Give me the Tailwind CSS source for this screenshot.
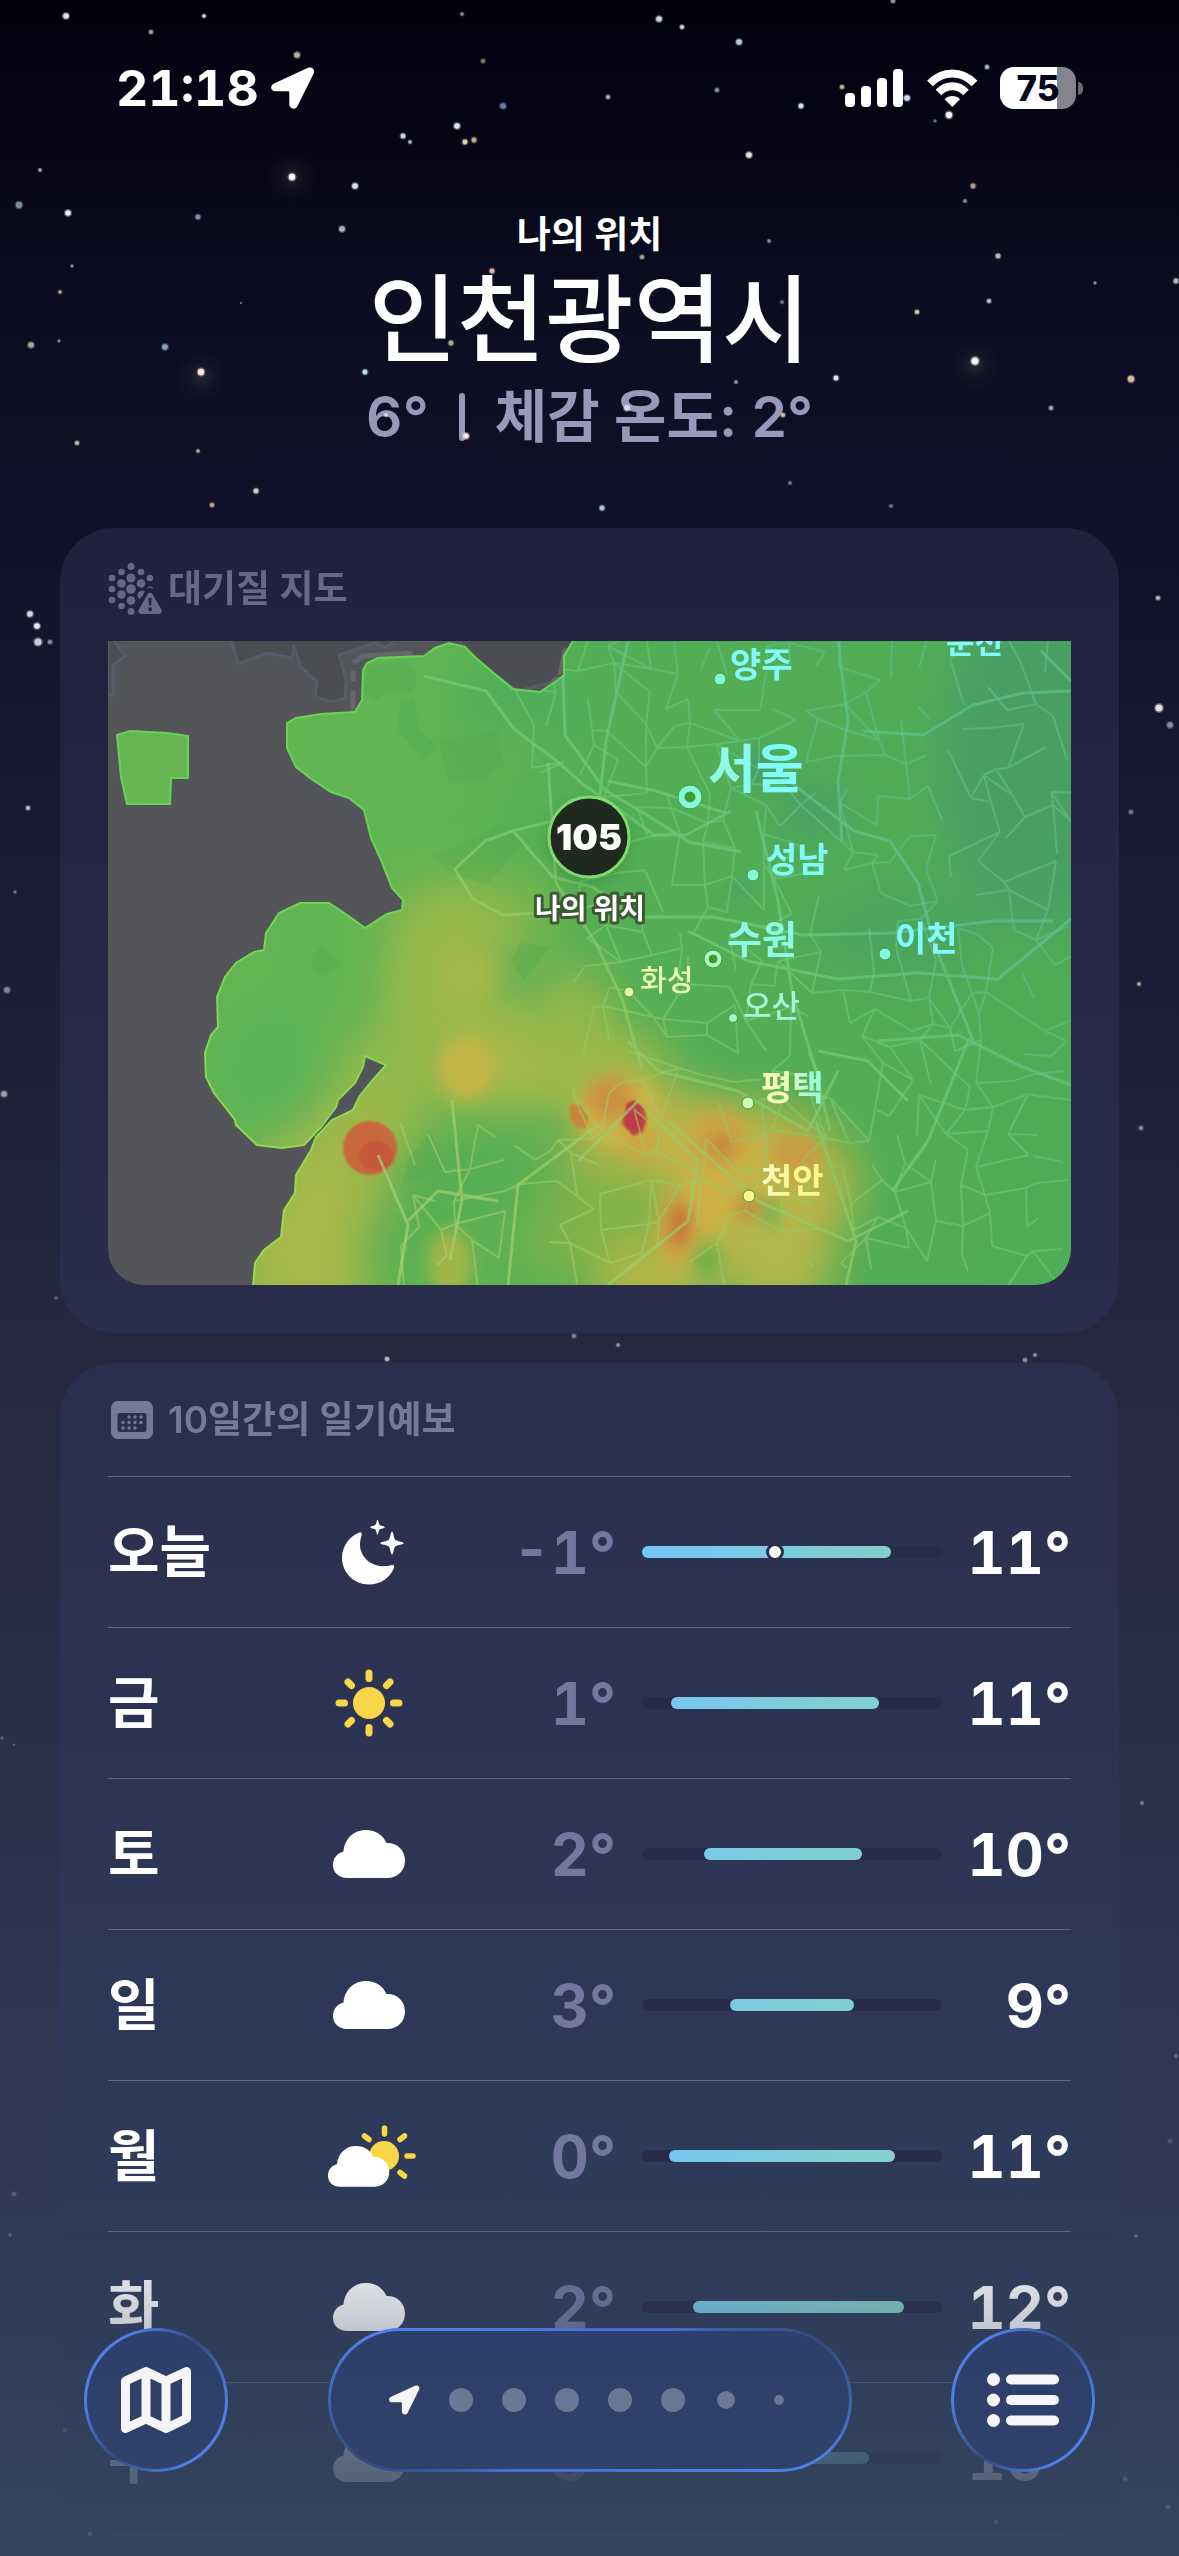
<!DOCTYPE html>
<html lang="ko">
<head>
  <meta charset="UTF-8">
  <meta name="viewport" content="width=device-width, initial-scale=1">
  <title>날씨 - 인천광역시</title>
  <script src="https://cdn.jsdelivr.net/npm/@tailwindcss/browser@4"></script>
  <style>
    body { font-family: Inter, 'Noto Sans CJK KR', sans-serif; }
  </style>
</head>
<body class="bg-[#02000f] text-white">

  <!-- Shared icons -->
  <svg class="hidden">
    <symbol id="i-arrow" viewBox="0 0 44 42">
      <path fill="currentColor" d="M37 .8 3 16.500c-4.500 2.200-3.500 7.700 1.500 7.700h12.300c1 0 1.500.5 1.500 1.500V37c0 5 6 6.500 8.200 2L42.700 6.500C44.500 2.500 41-.8 37 .8Z"/>
    </symbol>
    <symbol id="i-moon" viewBox="-8 0 70 65">
      <g fill="#fff">
        <path d="M17.500 12.500C7 16.500 0 26.500 0 38c0 14.500 12 26.500 27 26.500 11.500 0 21-6.500 25-16.500.8-2-.6-3.400-2.600-2.700C32 50 18 38 18 24.500c0-3.500.6-6 1.600-9 .8-2-.4-3.600-2.100-3Z"/>
        <path d="M35.500-.5c.8 0 1 4 2 5.200s5.300 1.500 5.300 2.500-4.200 1.300-5.300 2.500-1.200 5.100-2 5.100-1-4-2-5.100-5.300-1.500-5.300-2.500 4.200-1.300 5.300-2.500 1.200-5.200 2-5.200Z"/>
        <path d="M50 11.500c1.300 0 1.600 6.500 3.200 8.200s8.500 2 8.500 3.500-6.900 1.700-8.500 3.400-1.900 8.100-3.200 8.100-1.600-6.400-3.200-8.100-8.500-1.900-8.500-3.400 6.900-1.800 8.500-3.500 1.900-8.200 3.200-8.200Z"/>
      </g>
    </symbol>
    <symbol id="i-sun" viewBox="0 0 68 68">
      <circle cx="34" cy="34" r="16" fill="#f8d648"/>
      <path stroke="#f8d648" stroke-width="7" stroke-linecap="round" d="M34 4v5.500M34 58.500V64M4 34h5.500M58.500 34H64M13 13l3.500 3.500M51.500 51.500 55 55M13 55l3.500-3.500M51.500 16.500 55 13"/>
    </symbol>
    <symbol id="i-cloud" viewBox="0 0 72 48">
      <path fill="#fff" d="M14 48C6 48 0 42.500 0 35c0-7 4.500-12 10.500-13.500C11.500 9 20.500 0 33 0c9.500 0 17 5 20.500 13C64 12.500 72 20 72 30.500S64 48 54 48Z"/>
    </symbol>
    <symbol id="i-partly" viewBox="-6 0 94 62">
      <mask id="sun-cut">
        <rect width="88" height="62" fill="#fff"/>
        <path transform="translate(0 21) scale(.85)" stroke="#000" stroke-width="10" d="M14 48C6 48 0 42.500 0 35c0-7 4.500-12 10.500-13.500C11.500 9 20.500 0 33 0c9.500 0 17 5 20.500 13C64 12.500 72 20 72 30.500S64 48 54 48Z"/>
      </mask>
      <circle cx="56" cy="31" r="15" fill="#f8d648" mask="url(#sun-cut)"/>
      <path stroke="#f8d648" stroke-width="5.500" stroke-linecap="round" d="M56.500 3v6M79 31h6M72 14.500l4.500-3.500M72 47.500l4.500 3.500M36.500 11l4.500 3.500"/>
      <path fill="#fff" transform="translate(0 21) scale(.85)" d="M14 48C6 48 0 42.500 0 35c0-7 4.500-12 10.500-13.500C11.500 9 20.500 0 33 0c9.500 0 17 5 20.500 13C64 12.500 72 20 72 30.500S64 48 54 48Z"/>
    </symbol>
  </svg>

  <div class="relative h-screen overflow-hidden bg-[linear-gradient(#02000f_0%,#0a0b1e_10%,#11122a_21%,#1c1e37_38%,#26283f_53%,#2b2f48_68%,#2f3751_80%,#313d57_90%,#35455f_100%)]">

    <!-- Status bar -->
    <div class="flex h-[176px] items-center justify-between pl-[116px] pr-[96px]">
      <div class="flex items-center gap-3">
        <span class="text-[50px] font-bold leading-none tabular-nums">21:18</span>
        <svg class="h-[42px] w-[44px]"><use href="#i-arrow"/></svg>
      </div>
      <div class="flex items-center gap-[22px]">
        <svg class="h-[38px] w-[60px]" viewBox="0 0 60 38" fill="#fff">
          <rect x="0" y="24" width="10" height="14" rx="4"/>
          <rect x="16" y="17" width="10" height="21" rx="4"/>
          <rect x="32" y="9" width="10" height="29" rx="4"/>
          <rect x="48" y="0" width="10" height="38" rx="4"/>
        </svg>
        <svg class="h-[38px] w-[51px]" viewBox="0 0 51 38" fill="none" stroke="#fff">
          <path stroke-width="8" d="M3 14.500c12.500-13.300 32-13.300 44.500 0"/>
          <path stroke-width="8" d="M11.500 23.500c8-8.300 19.500-8.300 27.500 0"/>
          <path fill="#fff" stroke="none" d="m25.300 38-7.700-7.800c4.300-4.200 11.100-4.200 15.400 0Z"/>
        </svg>
        <div class="flex items-center gap-[2px]">
          <span class="flex h-[42px] w-[76px] items-center justify-center rounded-[14px] bg-[linear-gradient(90deg,#fff_75%,#85848e_75%)] text-[35px] font-extrabold leading-none text-[#05041a]">75</span>
          <span class="h-[13px] w-[5px] rounded-r-full bg-[#6a6974]"></span>
        </div>
      </div>
    </div>

    <!-- Location -->
    <header class="flex h-[352px] flex-col items-center pt-[35px]">
      <p class="text-[37px] font-semibold leading-[48px]">나의 위치</p>
      <h1 class="text-[96px] font-medium leading-[120px]">인천광역시</h1>
      <p class="flex items-center gap-[30px] text-[57px] font-semibold leading-[76px] text-[#9a98b8]">
        <span class="tabular-nums">6°</span>
        <span class="h-12 w-[6px] rounded-full bg-current"></span>
        <span>체감 온도: 2°</span>
      </p>
    </header>

    <svg id="stars" class="absolute inset-0 h-full w-full" viewBox="0 0 1179 2556" preserveAspectRatio="xMidYMin slice"></svg>

    <main class="relative -mt-[528px] h-screen px-[60px] pt-[528px] [mask-image:linear-gradient(#000_87%,rgb(0_0_0/.72)_91%,rgb(0_0_0/.22)_96%,rgb(0_0_0/.03)_100%)]">
      <div class="space-y-[30px]">

      <!-- Air quality map -->
      <section class="rounded-[54px] bg-linear-to-b from-[#20213c] to-[#2a2d4b] px-12 pb-12">
        <h2 class="flex h-[113px] items-center gap-[6px] pt-2 text-[37px] font-semibold text-[#68678a]">
          <svg class="h-[52px] w-[54px]" viewBox="0 0 54 52" fill="currentColor">
            <circle cx="23" cy="3.500" r="3.500"/><circle cx="13.500" cy="9" r="3.300"/><circle cx="33" cy="9" r="3.300"/>
            <circle cx="4" cy="15" r="3.300"/><circle cx="23" cy="15" r="4.500"/><circle cx="42" cy="15" r="3.300"/>
            <circle cx="13.500" cy="20.500" r="4.300"/><circle cx="33" cy="20.500" r="4.300"/>
            <circle cx="4" cy="26" r="3.300"/><circle cx="23" cy="26" r="4.800"/><path d="M39 25.500a3.500 3.500 0 0 1 6.500 0c-2-1-4.500-1-6.500 0Z"/>
            <circle cx="13.500" cy="31.500" r="4.300"/><path d="M37 28.500c-2 3-3 6-5.500 7.500a4.300 4.300 0 1 1 5.500-7.500Z"/>
            <circle cx="4" cy="37" r="3.300"/><circle cx="23" cy="37.500" r="4.300"/>
            <circle cx="13.500" cy="43" r="3.300"/><circle cx="23" cy="48.500" r="3.500"/>
            <path fill-rule="evenodd" d="M39.500 31.500c1.200-2.200 4-2.200 5.200 0l8.700 15c1.200 2.300-.2 4.500-2.700 4.500H33.500c-2.500 0-3.900-2.200-2.700-4.500ZM40.500 35l.6 7.500h2l.6-7.500ZM42.100 44.200a2 2 0 1 0 .1 0Z"/>
          </svg>
          대기질 지도
        </h2>
        <svg class="block w-full rounded-b-[36px]" viewBox="0 0 963 644">
          <defs>
            <path id="land" d="M465 0 456 15V34L450 39 432 51 405 48 388 34 368 17 357 6 341 2 327 7 316 15 270 17 259 22 255 29 254 59 247 71 213 73 188 77 179 82V107L188 126 202 137 223 151 241 157 256 169 263 197 273 219 284 247 295 259 294 269 279 273 257 287 242 276 221 262 192 262 171 272 158 292 156 309 146 311 128 322 117 336 109 356 110 386 103 394 97 412 98 436 106 452 117 466 127 479 128 484 149 504 174 507 196 504 213 486 228 466 230 459 247 442 255 426 257 415 278 424 263 441 251 456 245 469 224 479 208 496 203 509 188 534 187 552 176 569 173 596 156 609 147 622 145 646H965V-2H465ZM9 94 22 90 59 92 80 95V137H63L62 163H19L13 136Z"/>
            <clipPath id="land-clip"><use href="#land"/></clipPath>
            <filter id="b8" x="-80%" y="-80%" width="260%" height="260%"><feGaussianBlur stdDeviation="8"/></filter>
            <filter id="b22" x="-60%" y="-60%" width="220%" height="220%"><feGaussianBlur stdDeviation="22"/></filter>
            <filter id="b3"><feGaussianBlur stdDeviation="1"/></filter>
            <linearGradient id="ground" x1="0" y1="0" x2="1" y2="0">
              <stop offset="0" stop-color="#66b653"/><stop offset=".35" stop-color="#60b453"/>
              <stop offset=".5" stop-color="#54ae55"/><stop offset="1" stop-color="#4fac57"/>
            </linearGradient>
            <linearGradient id="road" gradientUnits="userSpaceOnUse" x1="330" y1="644" x2="800" y2="200">
              <stop offset="0" stop-color="#a8d070"/><stop offset=".45" stop-color="#94cc66"/><stop offset=".75" stop-color="#6aca7c"/><stop offset="1" stop-color="#5cc290"/>
            </linearGradient>
            <linearGradient id="edge" x1="0" y1="0" x2="0" y2="1">
              <stop offset=".3" stop-color="#68d455"/><stop offset="1" stop-color="#a4dc4c"/>
            </linearGradient>
            <linearGradient id="pt" x1="0" x2="1"><stop offset=".4" stop-color="#f2fab8"/><stop offset=".8" stop-color="#9ffbd8"/></linearGradient>
            <linearGradient id="su" x1="0" x2="1"><stop offset="0" stop-color="#94fae0"/><stop offset=".7" stop-color="#80fbfa"/></linearGradient>
            <linearGradient id="ca" x1="0" x2="1"><stop offset="0" stop-color="#f6fbc8"/><stop offset=".5" stop-color="#fdf78e"/></linearGradient>
          </defs>

          <rect width="963" height="644" fill="#545558"/>
          <path fill="#4b4d50" stroke="#565c68" stroke-width="3" d="M123-2 130 23 159 12 184 17 186 7 193 26 209 41 207 56 225 61 237 57 238 39 231 14 266 2 277 6 291-2ZM350-2 370 22 410 50 455 38 470-2ZM0-2h5l12 17L5 24v30H0Z"/>
          <path fill="none" stroke="#66676b" stroke-width="5" d="m245 22 10-7 50-3M245 30v10M245 50v20l-6 6M440 46l8-8h12M452 34l5-24 12-4"/>

          <!-- Heat map -->
          <g clip-path="url(#land-clip)">
            <rect width="963" height="644" fill="url(#ground)"/>
            <g filter="url(#b22)">
              <ellipse cx="930" cy="120" rx="100" ry="170" fill="#4a9f64"/>
              <ellipse cx="790" cy="290" rx="90" ry="50" fill="#4ba55d"/>
              <ellipse cx="420" cy="70" rx="70" ry="50" fill="#4fae5c"/>
              <ellipse cx="705" cy="170" rx="35" ry="28" fill="#469c68"/>
              <ellipse cx="390" cy="110" rx="40" ry="22" fill="#66b04f"/>
              <ellipse cx="360" cy="275" rx="90" ry="45" fill="#7fb64d"/>
              <ellipse cx="350" cy="350" rx="75" ry="95" fill="#9ab94b"/>
              <ellipse cx="425" cy="425" rx="140" ry="42" fill="#a8b94a"/>
              <ellipse cx="460" cy="375" rx="50" ry="50" fill="#93b84b"/>
              <ellipse cx="290" cy="430" rx="60" ry="50" fill="#90b84c"/>
              <ellipse cx="235" cy="510" rx="80" ry="60" fill="#a2b84a"/>
              <ellipse cx="200" cy="610" rx="68" ry="80" fill="#a8b948"/>
              <ellipse cx="620" cy="545" rx="130" ry="85" fill="#b8b447"/>
              <ellipse cx="560" cy="500" rx="100" ry="50" fill="#bdb446"/>
              <ellipse cx="490" cy="580" rx="90" ry="60" fill="#80b24a"/>
              <ellipse cx="620" cy="520" rx="80" ry="40" fill="#c4b347"/>
              <ellipse cx="545" cy="640" rx="55" ry="35" fill="#bcb746"/>
              <ellipse cx="670" cy="620" rx="55" ry="55" fill="#b4b748"/>
              <ellipse cx="360" cy="545" rx="85" ry="60" fill="#58af52"/>
              <ellipse cx="290" cy="610" rx="40" ry="50" fill="#5bb053"/>
              <ellipse cx="415" cy="335" rx="30" ry="35" fill="#62b153"/>
              <ellipse cx="165" cy="430" rx="60" ry="70" fill="#5cb356"/>
            </g>
            <g filter="url(#b8)">
              <ellipse cx="358" cy="428" rx="28" ry="32" fill="#c2b547"/>
              <ellipse cx="358" cy="335" rx="26" ry="28" fill="#a4b84a"/>
              <ellipse cx="342" cy="622" rx="22" ry="34" fill="#a0b549"/>
              <ellipse cx="510" cy="470" rx="42" ry="34" fill="#ccb444"/>
              <ellipse cx="503" cy="458" rx="24" ry="22" fill="#cc9042"/>
              <ellipse cx="530" cy="500" rx="16" ry="20" fill="#cda443"/>
              <ellipse cx="610" cy="500" rx="30" ry="30" fill="#cca443"/>
              <ellipse cx="614" cy="504" rx="10" ry="10" fill="#c5753a"/>
              <ellipse cx="600" cy="560" rx="26" ry="32" fill="#ccb045"/>
              <ellipse cx="571" cy="588" rx="24" ry="38" fill="#ccaa43"/>
              <ellipse cx="571" cy="584" rx="11" ry="24" fill="#c76f3a"/>
              <ellipse cx="688" cy="513" rx="24" ry="20" fill="#cb9c43"/>
              <ellipse cx="640" cy="567" rx="13" ry="10" fill="#c9853c"/>
              <ellipse cx="598" cy="618" rx="14" ry="18" fill="#70b04c"/>
              <ellipse cx="662" cy="572" rx="8" ry="14" fill="#68b052"/>
              <ellipse cx="648" cy="375" rx="18" ry="14" fill="#55ae55"/>
              <ellipse cx="633" cy="250" rx="14" ry="9" fill="#48a266"/>
              <ellipse cx="650" cy="125" rx="16" ry="20" fill="#46a068"/>
            </g>
            <g filter="url(#b3)">
              <circle cx="262" cy="507" r="27" fill="#c8683c"/>
              <ellipse cx="268" cy="515" rx="17" ry="15" fill="#c5583a"/>
              <path fill="#c9853d" d="m462 463 12 1 6 12-1 11h-10l-7-10Z"/>
              <path fill="#c4553e" d="m518 468 10-8 8 5 3 14-4 12-10 4-12-13Z"/>
              <path fill="#c03a46" d="m518 463 8-4 6 6 4 14-3 12-8 2-8-8Z"/>
            </g>
            <!-- Terrain -->
            <g fill="#4fa850" opacity=".35">
              <path d="m258 25 40-5 12 18-8 14-22-2-12 10-12-10ZM292 62l14-6 4 30 20 20-15 15-10-16-15-15ZM205 315l8-12 22 20-20 12-12-6ZM330 100l60-10 6 34-22 16h-34ZM325 215l50-22 20-10 20 20-36 40-36-10ZM300 520l22-30 12 28-12 18-28 8ZM402 320l10-18 30 4-26 34Z"/>
            </g>
            <!-- Roads -->
            <g fill="none" stroke="url(#road)" stroke-linejoin="round">
              <path id="lanes" stroke-width="2" opacity=".55"/>
              <path stroke-width="3" opacity=".7" d="m316 35 62 15 28 38 40 30 30 26 40 28 30 22h32l45-24M455 34l2 60 40 55 50 30 34 22 52 10M520 0l-22 100-10 90M440 122l8 120 40 60 26 56 20 70M500 140l48 10 70 22M405 190l-28 10-30 28 18 30 30 16 30-2M405 190l70-18M405 190l40 46 40 10 40 30h80l90 18 90-2 100-12h60M648 170l22 90 14 90 24 80 14 60M668 130l78 60 36 10 28 42 16 60 40 100M730 0l10 80-10 60 4 60M755 90l60 4 50-30 50-12 48-2M963 40l-30-30M580 290l60 30 90 18 80-6 80 6 73-60M520 400l30 30 80 20 70 40 30-60M470 520l60-60 60 60-10 60-80 64M560 480l90 80 90 40 60-30M708 480l20 60 20 60-10 44M800 460l-40-40-50-10M770 400l80-6 60 30 53 20M400 644l10-100 40-30 40-30M342 619l12-60-10-100M290 644l10-60-30-70M300 580l30-30 60 10M860 400l-40 100-36 50"/>
            </g>
          </g>
          <use href="#land" fill="none" stroke="url(#edge)" stroke-width="2"/>

          <!-- Cities -->
          <g stroke="#3f9c2c" stroke-width="1" fill="#86f8de">
            <circle cx="612" cy="38" r="6"/>
            <circle cx="645" cy="234" r="6"/>
            <circle cx="777" cy="313" r="6"/>
            <circle cx="521" cy="351" r="5" fill="#ebf9ac"/>
            <circle cx="625" cy="377" r="4.500" fill="#a0f8cc"/>
            <circle cx="640" cy="462" r="6" fill="#d0fab8"/>
            <circle cx="641" cy="555" r="6" fill="#fdf98a"/>
            <circle cx="582" cy="156" r="12"/><circle cx="582" cy="156" r="5" fill="#3f9c2c"/>
            <circle cx="605" cy="318" r="9" fill="#aef7c8"/><circle cx="605" cy="318" r="4" fill="#3f9c2c"/>
          </g>
          <g fill="#80fbfa" font-size="34" font-weight="600">
            <text x="838" y="12" font-size="31">춘천</text>
            <text x="622" y="36">양주</text>
            <text x="600" y="147" font-size="52" fill="url(#su)">서울</text>
            <text x="658" y="231">성남</text>
            <text x="619" y="312" font-size="38" fill="#8cfae4">수원</text>
            <text x="787" y="310">이천</text>
            <text x="532" y="350" font-size="29" font-weight="500" fill="#ecfab0">화성</text>
            <text x="635" y="376" font-size="31" font-weight="500" fill="#a6f8d4">오산</text>
            <text x="653" y="459" fill="url(#pt)">평택</text>
            <text x="653" y="552" fill="url(#ca)">천안</text>
          </g>

          <!-- Current location -->
          <circle cx="481" cy="202" r="40" fill="#23602c" opacity=".35" filter="url(#b8)"/>
          <circle cx="481" cy="196" r="40" fill="#20291f" stroke="#7fdc6c" stroke-width="3"/>
          <text x="481" y="209" text-anchor="middle" font-size="36" font-weight="900" fill="#fff">105</text>
          <text x="482" y="278" text-anchor="middle" font-size="28" font-weight="600" fill="#fff" stroke="#3c5a34" stroke-width="6" stroke-linejoin="round" paint-order="stroke">나의 위치</text>
        </svg>
      </section>

      <!-- 10-day forecast -->
      <section class="rounded-t-[54px] bg-linear-to-b from-[#2b2e4c] via-[#2d3757] to-[#31425e] px-12 pb-12">
        <h2 class="flex h-[113px] items-center gap-[14px] text-[37px] font-semibold text-[#757a9c]">
          <svg class="ml-[3px] h-[38px] w-[43px]" viewBox="0 0 43 38" fill="currentColor">
            <path fill-rule="evenodd" d="M7 0h28a7 7 0 0 1 7 7v24a7 7 0 0 1-7 7H7a7 7 0 0 1-7-7V7a7 7 0 0 1 7-7Zm2 12a2.500 2.500 0 0 0-2.500 2.500v14A2.500 2.500 0 0 0 9 31h24a2.500 2.500 0 0 0 2.500-2.500v-14A2.500 2.500 0 0 0 33 12Z"/>
            <g>
              <circle cx="18" cy="16" r="1.700"/><circle cx="24" cy="16" r="1.700"/><circle cx="30" cy="16" r="1.700"/>
              <circle cx="12" cy="21.500" r="1.700"/><circle cx="18" cy="21.500" r="1.700"/><circle cx="24" cy="21.500" r="1.700"/><circle cx="30" cy="21.500" r="1.700"/>
              <circle cx="12" cy="27" r="1.700"/><circle cx="18" cy="27" r="1.700"/><circle cx="24" cy="27" r="1.700"/>
            </g>
          </svg>
          10일간의 일기예보
        </h2>
        <table class="w-full table-fixed">
          <colgroup>
            <col class="w-[210px]"><col class="w-[102px]"><col class="w-[196px]"><col><col class="w-[129px]">
          </colgroup>
          <tbody id="forecast"></tbody>
        </table>
      </section>
      </div>
    </main>
  </div>

  <!-- Bottom toolbar -->
  <nav class="fixed inset-x-[84px] bottom-[84px] flex items-center justify-between">
    <button aria-label="지도" class="flex size-36 items-center justify-center rounded-full border-3 border-transparent [background:linear-gradient(#2d3f6a,#30426a)_padding-box,linear-gradient(125deg,#4f80ea_20%,#33497c_50%,#4f80ea_80%)_border-box]">
      <svg class="h-[66px] w-[70px]" viewBox="0 0 70 66" fill="none" stroke="#f5f5f8" stroke-width="9" stroke-linejoin="round">
        <path d="M4.500 14 25 4.500l20 9.500 20.500-9.500v47L45 61.500 25 52 4.500 61.500ZM25 4.500V52M45 14v47.500"/>
      </svg>
    </button>
    <div class="flex h-36 w-[524px] items-center justify-center rounded-full border-3 border-transparent text-[#f5f5f8] [background:linear-gradient(#2d3f6a,#30426a)_padding-box,conic-gradient(#456fd0_50deg,#33497c_76deg,#4f80ea_105deg,#456fd0_180deg,#456fd0_230deg,#33497c_256deg,#4f80ea_285deg,#456fd0)_border-box]">
      <span class="flex w-[60px] justify-center"><svg class="h-[30px] w-[31px]"><use href="#i-arrow"/></svg></span>
      <span class="flex w-[53px] justify-center"><i class="size-6 rounded-full bg-[#6b7894]"></i></span>
      <span class="flex w-[53px] justify-center"><i class="size-6 rounded-full bg-[#6b7894]"></i></span>
      <span class="flex w-[53px] justify-center"><i class="size-6 rounded-full bg-[#6b7894]"></i></span>
      <span class="flex w-[53px] justify-center"><i class="size-6 rounded-full bg-[#6b7894]"></i></span>
      <span class="flex w-[53px] justify-center"><i class="size-6 rounded-full bg-[#6b7894]"></i></span>
      <span class="flex w-[53px] justify-center"><i class="size-[18px] rounded-full bg-[#6b7894]"></i></span>
      <span class="flex w-[53px] justify-center"><i class="size-[10px] rounded-full bg-[#6b7894]"></i></span>
    </div>
    <button aria-label="목록" class="flex size-36 items-center justify-center rounded-full border-3 border-transparent [background:linear-gradient(#2d3f6a,#30426a)_padding-box,linear-gradient(125deg,#4f80ea_20%,#33497c_50%,#4f80ea_80%)_border-box]">
      <svg class="h-[54px] w-[72px]" viewBox="0 0 72 54" fill="#f5f5f8">
        <circle cx="6.500" cy="6.500" r="6.500"/><circle cx="6.500" cy="27" r="6.500"/><circle cx="6.500" cy="47.500" r="6.500"/>
        <rect x="19" y="1.500" width="53" height="10" rx="5"/><rect x="19" y="22" width="53" height="10" rx="5"/><rect x="19" y="42.500" width="53" height="10" rx="5"/>
      </svg>
    </button>
  </nav>

  <script>
    // start / end are percentages of the temperature track
    const days = [
      { day: '오늘', icon: 'moon', low: -1, high: 11, start: 0, end: 83, from: '#76c3f5', to: '#83d0cc', now: 44.400 },
      { day: '금', icon: 'sun', low: 1, high: 11, start: 9.700, end: 79, from: '#79c7ee', to: '#82d0cd' },
      { day: '토', icon: 'cloud', low: 2, high: 10, start: 20.700, end: 73.300, from: '#7bcae4', to: '#80ced2' },
      { day: '일', icon: 'cloud', low: 3, high: 9, start: 29.300, end: 70.700, from: '#7dcbdf', to: '#80ced4' },
      { day: '월', icon: 'partly', low: 0, high: 11, start: 9, end: 84.300, from: '#78c6ee', to: '#83d0cb' },
      { day: '화', icon: 'cloud', low: 2, high: 12, start: 17, end: 87.300, from: '#7bc9e8', to: '#86d2c6' },
      { day: '수', icon: 'cloud', low: 3, high: 10, start: 27, end: 75.700, from: '#7dcbdf', to: '#80ced2' }
    ];

    const iconSize = {
      moon: 'h-[65px] w-[70px]',
      sun: 'h-[68px] w-[68px]',
      cloud: 'h-[48px] w-[72px]',
      partly: 'h-[62px] w-[94px]'
    };

    document.getElementById('forecast').innerHTML = days.map(d => `
      <tr class="h-[151px] border-y border-[#636983]">
        <th scope="row" class="text-left text-[56px] font-semibold leading-none">${d.day}</th>
        <td><div class="flex justify-center"><svg class="shrink-0 ${iconSize[d.icon]}"><use href="#i-${d.icon}"/></svg></div></td>
        <td class="text-right text-[59px] font-bold leading-none tabular-nums text-[#7278a0]">${d.low}°</td>
        <td class="pl-[26px]">
          <div class="relative h-3 rounded-full bg-[#272d48]">
            <div class="absolute inset-y-0 rounded-full" style="left:${d.start}%;right:${100 - d.end}%;background:linear-gradient(90deg,${d.from},${d.to})"></div>
            ${d.now ? `<div class="absolute -top-[3px] size-[18px] -translate-x-1/2 rounded-full border-3 border-[#2b2f4b] bg-white" style="left:${d.now}%"></div>` : ''}
          </div>
        </td>
        <td class="text-right text-[59px] font-bold leading-none tabular-nums">${d.high}°</td>
      </tr>`).join('');

    // x, y, radius, colour
    const stars = [
      [66,16,4,'#dfe6ee'],[204,16,2.500,'#e8dccf'],[151,32,3,'#a99a90'],[297,55,4,'#b8ae98'],[462,14,2.500,'#8e8a80'],[483,61,3,'#7d7a70'],
      [659,19,4,'#c9d6e2'],[682,27,3,'#c8d0d8'],[739,42,4,'#bcccd8'],[503,106,4,'#6a7fa5'],[608,97,3,'#c09a90'],[717,90,3,'#7f92a5'],
      [801,106,3.500,'#d5e0ea'],[842,87,3,'#c9b090'],[907,98,4,'#cfe0f0'],[987,67,3,'#b0b8c0'],[949,115,4.500,'#f4f6fa'],[935,121,2,'#6a6f80'],
      [457,126,4,'#dbe8f4'],[403,136,3.500,'#cdd8e0'],[410,142,2.500,'#b0b8c0'],[465,142,3.500,'#e8cfae'],[474,140,3.500,'#c4a890'],[749,155,4,'#e6e2d4'],
      [40,170,2.500,'#a8a49a'],[292,177,4.500,'#fff'],[355,186,4,'#dfe4e8'],[973,186,3.500,'#b89a8c'],[965,201,2.500,'#8a8c90'],[19,205,4.500,'#7d8da0'],
      [68,213,4,'#e6edf4'],[198,217,3.500,'#7590a8'],[342,229,4,'#a8b8c4'],[769,241,2.500,'#7d8da0'],[998,256,3.500,'#b4b8b8'],[642,257,3,'#a8a490'],
      [492,271,3.500,'#e0b8a8'],[1176,281,3.500,'#b0b8bc'],[1095,283,2,'#8a90a0'],[72,266,2,'#8a90a0'],[60,292,2.500,'#c09a8a'],[989,301,3,'#b8bcc4'],
      [782,302,2.500,'#70788a'],[241,303,1.500,'#70788a'],[917,312,3,'#d4ccb8'],[451,343,3.500,'#a8a890'],[31,345,4,'#a4a898'],[59,341,2,'#80889a'],
      [165,347,4,'#8aa4c4'],[975,361,5,'#f4f8ff'],[201,372,4.500,'#f8e8e0'],[365,372,3.500,'#c4dcf0'],[1131,379,4.500,'#d8b89c'],[836,378,3.500,'#e0e4ea'],
      [736,382,2.500,'#9094a4'],[627,408,4,'#d4e0f8'],[386,415,2.500,'#d8d8e0'],[783,415,3,'#d8b8a0'],[1051,408,3,'#a4a8b0'],[466,436,4,'#f4e8e0'],
      [77,443,3,'#b8b4a0'],[198,451,2.500,'#b8a890'],[256,491,3.500,'#d4ccc0'],[212,505,3,'#c4a890'],[790,483,2.500,'#70788a'],[602,508,3.500,'#a8c4e0'],
      [891,506,2.500,'#70788a'],[893,1,3,'#90949c'],
      [30,614,4,'#d4d8e0'],[37,626,4,'#e8ecf0'],[38,642,5,'#c4ccd8'],[50,642,3,'#8a90a0'],[28,808,3,'#b8bcc4'],[15,892,2,'#707890'],[7,990,4,'#7888a8'],
      [4,1094,4,'#9aa0a8'],[1158,598,3,'#b0b4bc'],[1159,708,5,'#e8e0e0'],[1170,725,4,'#8a8c98'],[1131,812,3,'#70788a'],[1139,984,2.500,'#b8a8a0'],
      [1141,1128,3,'#8a8494'],[387,1359,3,'#b8bcc4'],[574,1336,3,'#7c8090'],[618,1345,2.500,'#9094a4'],[1025,1360,3,'#8a8e9c'],[1035,1355,2.500,'#9094a4'],
      [56,1298,2.500,'#60647a'],[2,1738,2,'#60647a'],[14,1745,1.500,'#60647a'],[1142,1803,2.500,'#807a88'],[1176,2056,2.500,'#666e84'],[1170,2141,3,'#505a70'],
      [1136,2236,2,'#626c84'],[14,2194,3,'#56607a'],[10,2235,2,'#56607a'],[1125,2479,3,'#4a5872'],[1168,2507,3,'#4a5872'],[996,2522,3,'#4a5872'],[65,2430,3,'#4a5872'],[90,2534,3,'#4a5872']
    ];
    const halos = [[292,177],[975,365],[201,376]];
    document.getElementById('stars').innerHTML =
      '<defs><radialGradient id="halo"><stop offset="0" stop-color="#8a806a" stop-opacity=".2"/><stop offset=".5" stop-color="#8a806a" stop-opacity=".05"/><stop offset="1" stop-color="#8a806a" stop-opacity="0"/></radialGradient></defs>' +
      halos.map(([x, y]) => `<circle cx="${x}" cy="${y}" r="26" fill="url(#halo)"/>`).join('') +
      stars.map(([x, y, r, c]) => `<circle cx="${x}" cy="${y}" r="${r}" fill="${c}" opacity=".35"/><circle cx="${x}" cy="${y}" r="${r * 0.7}" fill="${c}"/>`).join('');

    // Minor road network: a jittered grid with some links dropped
    let seed = 7;
    const rnd = () => (seed = (seed * 16807) % 2147483647) / 2147483647;
    const cols = 24, rows = 23, cell = 29;
    const node = [];
    for (let r = 0; r < rows; r++) {
      node.push([]);
      for (let c = 0; c < cols; c++) {
        node[r].push([Math.round(300 + c * cell + (rnd() - 0.5) * 26), Math.round(r * cell + (rnd() - 0.5) * 26)]);
      }
    }
    const open = ([x, y]) => x > 455 || (y > 480 && x > 290) || (y < 130 && x > 400);
    let lanes = '';
    for (let r = 0; r < rows - 1; r++) {
      for (let c = 0; c < cols - 1; c++) {
        const a = node[r][c];
        if (!open(a)) continue;
        if (rnd() < 0.55) lanes += `M${a}L${node[r][c + 1]}`;
        if (rnd() < 0.55) lanes += `M${a}L${node[r + 1][c]}`;
        if (rnd() < 0.12) lanes += `M${a}L${node[r + 1][c + 1]}`;
      }
    }
    document.getElementById('lanes').setAttribute('d', lanes);
  </script>
</body>
</html>
